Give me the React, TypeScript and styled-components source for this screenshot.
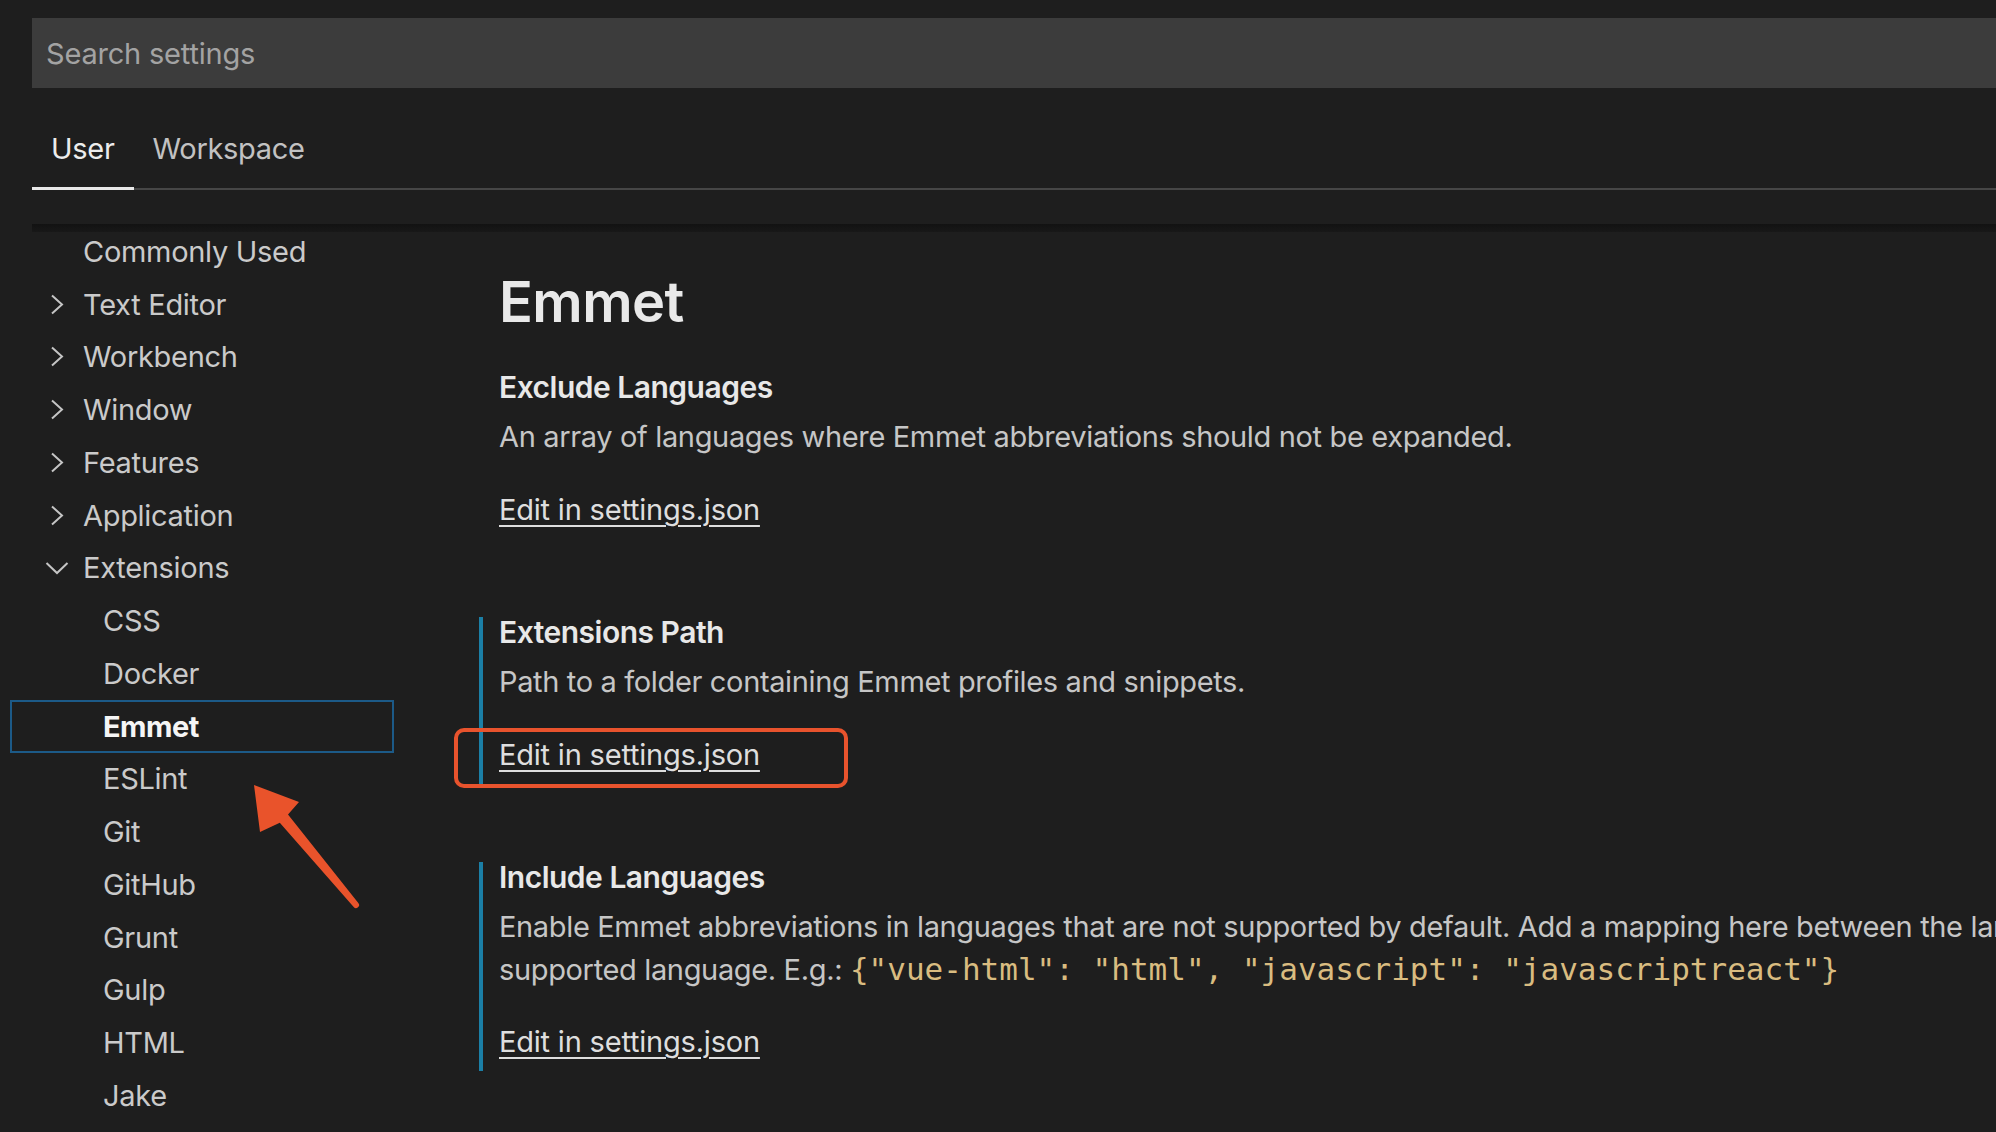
import React from "react";
import styled, { createGlobalStyle } from "styled-components";

const GlobalStyle = createGlobalStyle`
  html, body {
    margin: 0;
    padding: 0;
    background: #1e1e1e;
    width: 1996px;
    height: 1132px;
    overflow: hidden;
  }
  * { box-sizing: border-box; }
`;

const Page = styled.div`
  position: relative;
  width: 1996px;
  height: 1132px;
  overflow: hidden;
  background: #1e1e1e;
  font-family: Inter, "Noto Sans", "Liberation Sans", sans-serif;
  color: #cccccc;
`;

const Header = styled.div`
  padding: 18px 0 0 32px;
`;

const SearchBox = styled.div`
  height: 70px;
  background: #3c3c3c;
  display: flex;
  align-items: center;
  padding-left: 14px;
  font-size: 29px;
  color: #a3a3a3;
  letter-spacing: -0.2px;
`;

const TabBar = styled.div`
  margin-top: 18px;
  display: flex;
  height: 84px;
  box-shadow: inset 0 -2px 0 #464646;
`;

const Tab = styled.div<{ $active?: boolean }>`
  height: 84px;
  padding: 0 19px;
  display: flex;
  align-items: center;
  font-size: 29px;
  letter-spacing: -0.3px;
  color: ${(p) => (p.$active ? "#ececec" : "#c2c2c2")};
  border-bottom: 3px solid ${(p) => (p.$active ? "#e8e8e8" : "transparent")};
  padding-top: 3px;
`;

const Body = styled.div`
  position: relative;
  margin-top: 34px;
  display: flex;
`;

const ScrollShadow = styled.div`
  position: absolute;
  top: 0;
  left: 32px;
  right: 0;
  height: 8px;
  background: linear-gradient(#121212, #181818);
  z-index: 2;
`;

const Sidebar = styled.div`
  width: 384px;
  margin-left: 10px;
  padding-top: 1px;
  flex-shrink: 0;
`;

const TreeRow = styled.div<{ $level: number; $focused?: boolean }>`
  height: 52.75px;
  display: flex;
  align-items: center;
  padding-left: ${(p) => 33 + p.$level * 20}px;
  border: 2px solid ${(p) => (p.$focused ? "#1c5a87" : "transparent")};
  font-size: 29px;
  letter-spacing: ${(p) => (p.$focused ? "-0.5px" : "-0.3px")};
  font-weight: ${(p) => (p.$focused ? 700 : 400)};
  color: ${(p) => (p.$focused ? "#f5f5f5" : "#cacaca")};
  white-space: nowrap;
`;

const Twistie = styled.span`
  width: 24px;
  height: 24px;
  margin-right: 14px;
  display: flex;
  align-items: center;
  justify-content: center;
  flex-shrink: 0;
`;

const Content = styled.div`
  margin-left: 85px;
  padding-top: 43px;
  flex: 1;
  min-width: 0;
`;

const GroupTitle = styled.div`
  padding-left: 20px;
  height: 70px;
  line-height: 70px;
  font-size: 56px;
  font-weight: 600;
  color: #e9e9e9;
  letter-spacing: -0.6px;
  margin-bottom: 35px;
`;

const SettingItem = styled.div<{ $modified?: boolean }>`
  border-left: 4px solid ${(p) => (p.$modified ? "#1b7fa6" : "transparent")};
  padding: 0 0 8px 16px;
  margin-bottom: 78px;
`;

const SettingTitle = styled.div`
  height: 30px;
  line-height: 30px;
  font-size: 30px;
  font-weight: 600;
  color: #e8e8e8;
  letter-spacing: -0.5px;
  margin-bottom: 14px;
  white-space: nowrap;
`;

const DescLine = styled.div`
  line-height: 42px;
  height: 42px;
  font-size: 29px;
  color: #c6c6c6;
  letter-spacing: -0.35px;
  white-space: nowrap;
`;

const Code = styled.span`
  font-family: "DejaVu Sans Mono", "Liberation Mono", monospace;
  font-size: 31px;
  color: #d9bc80;
  letter-spacing: 0;
`;

const LinkRow = styled.div`
  position: relative;
  margin-top: 31px;
  height: 42px;
  line-height: 42px;
`;

const Link = styled.span`
  font-size: 29px;
  color: #dedede;
  letter-spacing: -0.2px;
  text-decoration: underline;
  text-decoration-thickness: 2px;
  text-underline-offset: 5px;
`;

const Highlight = styled.div`
  position: absolute;
  left: -45px;
  top: -6px;
  width: 394px;
  height: 60px;
  border: 4px solid #e8532d;
  border-radius: 10px;
  pointer-events: none;
`;

const ArrowSvg = styled.svg`
  position: absolute;
  left: 240px;
  top: 770px;
  z-index: 5;
`;

const ChevronRight = () => (
  <svg width="14" height="21" viewBox="0 0 14 21">
    <polyline points="2,1.5 12,10.5 2,19.5" fill="none" stroke="#c5c5c5" strokeWidth="2" />
  </svg>
);

const ChevronDown = () => (
  <svg width="24" height="14" viewBox="0 0 24 14">
    <polyline points="1.5,2 12,12 22.5,2" fill="none" stroke="#c5c5c5" strokeWidth="2" />
  </svg>
);

type Node = { label: string; level: number; twistie?: "right" | "down"; focused?: boolean };

const tree: Node[] = [
  { label: "Commonly Used", level: 0 },
  { label: "Text Editor", level: 0, twistie: "right" },
  { label: "Workbench", level: 0, twistie: "right" },
  { label: "Window", level: 0, twistie: "right" },
  { label: "Features", level: 0, twistie: "right" },
  { label: "Application", level: 0, twistie: "right" },
  { label: "Extensions", level: 0, twistie: "down" },
  { label: "CSS", level: 1 },
  { label: "Docker", level: 1 },
  { label: "Emmet", level: 1, focused: true },
  { label: "ESLint", level: 1 },
  { label: "Git", level: 1 },
  { label: "GitHub", level: 1 },
  { label: "Grunt", level: 1 },
  { label: "Gulp", level: 1 },
  { label: "HTML", level: 1 },
  { label: "Jake", level: 1 },
];

export default function App() {
  return (
    <Page>
      <GlobalStyle />
      <Header>
        <SearchBox>Search settings</SearchBox>
        <TabBar>
          <Tab $active>User</Tab>
          <Tab>Workspace</Tab>
        </TabBar>
      </Header>
      <Body>
        <ScrollShadow />
        <Sidebar>
          {tree.map((n) => (
            <TreeRow key={n.label} $level={n.level} $focused={n.focused}>
              <Twistie>
                {n.twistie === "right" && <ChevronRight />}
                {n.twistie === "down" && <ChevronDown />}
              </Twistie>
              {n.label}
            </TreeRow>
          ))}
        </Sidebar>
        <Content>
          <GroupTitle>Emmet</GroupTitle>
          <SettingItem>
            <SettingTitle>Exclude Languages</SettingTitle>
            <DescLine>An array of languages where Emmet abbreviations should not be expanded.</DescLine>
            <LinkRow>
              <Link>Edit in settings.json</Link>
            </LinkRow>
          </SettingItem>
          <SettingItem $modified>
            <SettingTitle>Extensions Path</SettingTitle>
            <DescLine>Path to a folder containing Emmet profiles and snippets.</DescLine>
            <LinkRow>
              <Link>Edit in settings.json</Link>
              <Highlight />
            </LinkRow>
          </SettingItem>
          <SettingItem $modified>
            <SettingTitle>Include Languages</SettingTitle>
            <DescLine>
              Enable Emmet abbreviations in languages that are not supported by default. Add a mapping here between the language and Emmet
            </DescLine>
            <DescLine>
              supported language. E.g.: <Code>{'{"vue-html": "html", "javascript": "javascriptreact"}'}</Code>
            </DescLine>
            <LinkRow>
              <Link>Edit in settings.json</Link>
            </LinkRow>
          </SettingItem>
        </Content>
      </Body>
      <ArrowSvg width="130" height="150" viewBox="0 0 130 150">
        <path
          d="M14 15 L59 32 L48 44.5 L118.3 133 A3 3 0 0 1 113.7 137 L39.8 52.8 L20 62 Z"
          fill="#e9532b"
        />
      </ArrowSvg>
    </Page>
  );
}
